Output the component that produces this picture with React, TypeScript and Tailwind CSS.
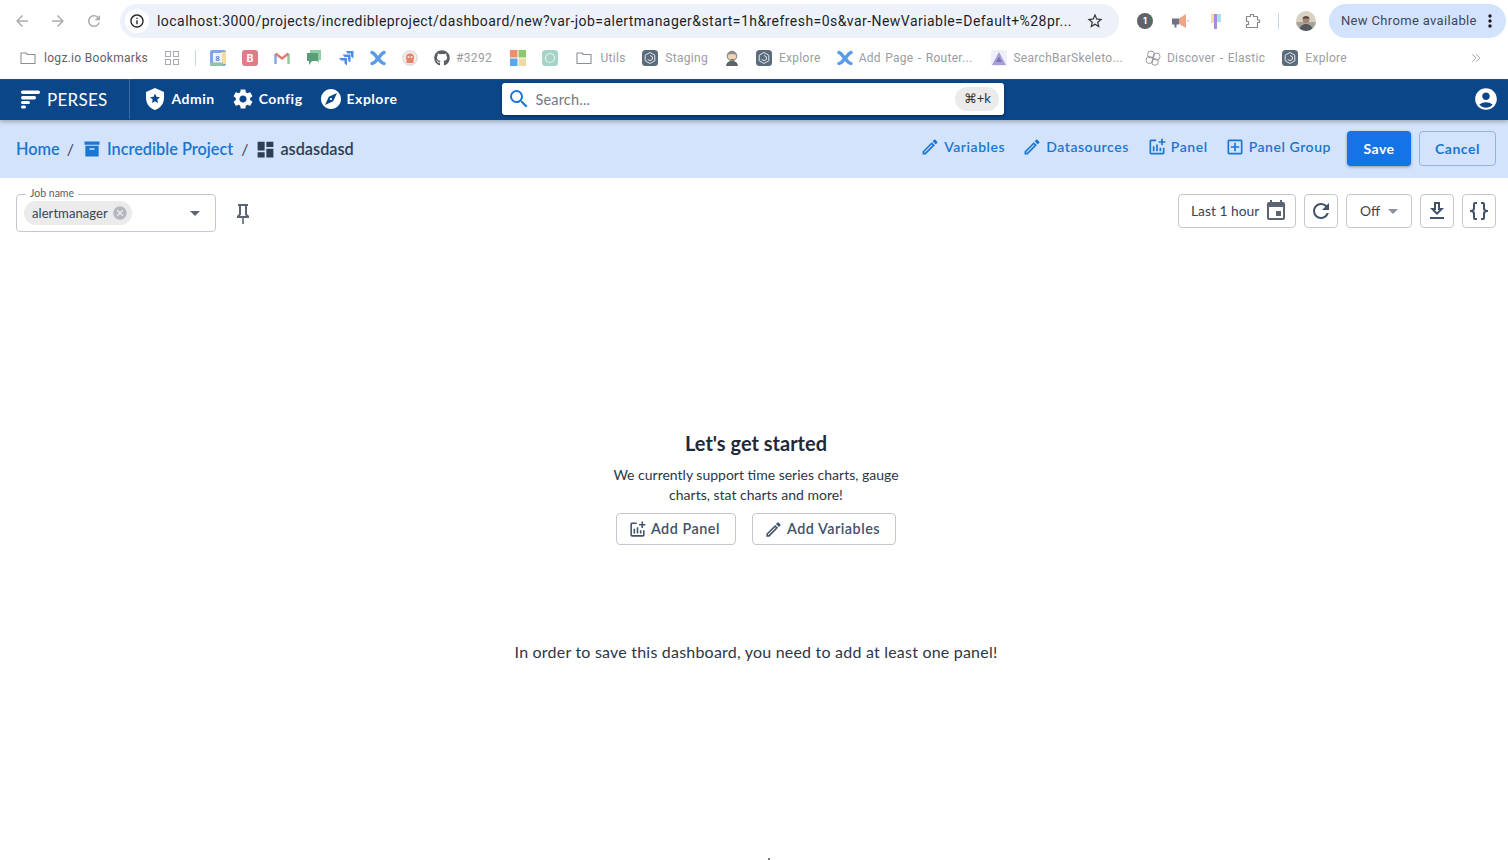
import { FaGithub } from "react-icons/fa";
import { MdAccountCircle, MdArrowBack, MdArrowDropDown, MdArrowForward, MdCancel, MdDashboard, MdExplore, MdInfoOutline, MdMoreVert, MdRefresh, MdSearch, MdSettings, MdStarBorder } from "react-icons/md";
import type { ReactNode } from "react";

// material design paths that the icon packages don't carry
const paths = {
  shieldStar: "M12,1L3,5V11C3,16.55 6.84,21.74 12,23C17.16,21.74 21,16.55 21,11V5L12,1M15.08,16L12,14.15L8.93,16L9.74,12.5L7.03,10.16L10.61,9.85L12,6.55L13.39,9.84L16.97,10.15L14.26,12.5L15.08,16Z",
  archive: "M3,3H21V7H3V3M4,8H20V21H4V8M9.5,11A0.5,0.5 0 0,0 9,11.5V13H15V11.5A0.5,0.5 0 0,0 14.5,11H9.5Z",
  pencil: "M14.06,9L15,9.94L5.92,19H5V18.08L14.06,9M17.66,3C17.41,3 17.15,3.1 16.96,3.29L15.13,5.12L18.88,8.87L20.71,7.04C21.1,6.65 21.1,6 20.71,5.63L18.37,3.29C18.17,3.09 17.92,3 17.66,3M14.06,6.19L3,17.25V21H6.75L17.81,9.94L14.06,6.19Z",
  chartPlus: "M22 5V7H19V10H17V7H14V5H17V2H19V5H22M19 19H5V5H11V3H5C3.9 3 3 3.9 3 5V19C3 20.1 3.9 21 5 21H19C20.1 21 21 20.1 21 19V13H19V19M15 13V17H17V13H15M11 17H13V9H11V17M7 17H9V11H7V17Z",
  plusBox: "M19,19V5H5V19H19M19,3A2,2 0 0,1 21,5V19A2,2 0 0,1 19,21H5A2,2 0 0,1 3,19V5C3,3.89 3.9,3 5,3H19M11,7H13V11H17V13H13V17H11V13H7V11H11V7Z",
  pin: "M16,12V4H17V2H7V4H8V12L6,14V16H11.2V22H12.8V16H18V14L16,12M8.8,14L10,12.8V4H14V12.8L15.2,14H8.8Z",
  calendar: "M19,19H5V8H19M16,1V3H8V1H6V3H5C3.89,3 3,3.89 3,5V19A2,2 0 0,0 5,21H19A2,2 0 0,0 21,19V5C21,3.89 20.1,3 19,3H18V1M17,12H12V17H17V12Z",
  refresh: "M17.65,6.35C16.2,4.9 14.21,4 12,4A8,8 0 0,0 4,12A8,8 0 0,0 12,20C15.73,20 18.84,17.45 19.73,14H17.65C16.83,16.33 14.61,18 12,18A6,6 0 0,1 6,12A6,6 0 0,1 12,6C13.66,6 15.14,6.69 16.22,7.78L13,11H20V4L17.65,6.35Z",
  download: "M13,5V11H14.17L12,13.17L9.83,11H11V5H13M15,3H9V9H5L12,16L19,9H15V3M19,18H5V20H19V18Z",
  braces: "M8,3A2,2 0 0,0 6,5V9A2,2 0 0,1 4,11H3V13H4A2,2 0 0,1 6,15V19A2,2 0 0,0 8,21H10V19H8V14A2,2 0 0,0 6,12A2,2 0 0,0 8,10V5H10V3H8M16,3A2,2 0 0,1 18,5V9A2,2 0 0,0 20,11H21V13H20A2,2 0 0,0 18,15V19A2,2 0 0,1 16,21H14V19H16V14A2,2 0 0,1 18,12A2,2 0 0,1 16,10V5H14V3H16Z",
};

function Mdi({ d, className }: { d: string; className?: string }) {
  return (
    <svg viewBox="0 0 24 24" fill="currentColor" className={className}>
      <path d={d} />
    </svg>
  );
}

function Folder() {
  return (
    <svg viewBox="0 0 16 16" fill="none" stroke="#8a8f96" strokeWidth="1.1" className="w-4 h-4">
      <path d="M1 3h5l1.5 1.5H15v9H1z" strokeLinejoin="round" />
    </svg>
  );
}

function XLogo() {
  return (
    <svg viewBox="0 0 16 16" className="w-4 h-4" fill="none" stroke="#5a9be8" strokeWidth="3.4" strokeLinecap="round">
      <path d="M2 13.500C5 13.500 5.500 11 8 8.500C10.500 6 11.500 3 14 2.500" />
      <path d="M2 2.500C4.500 3 5.500 6 8 8.500C10.500 11 11.500 13.500 14 13.500" />
    </svg>
  );
}

function Hex() {
  return (
    <svg viewBox="0 0 16 16" className="w-4 h-4">
      <rect width="16" height="16" rx="3.500" fill="#5b6b7c" />
      <path d="M8 2.500l4.800 2.700v5.600L8 13.500l-4.800-2.700V5.200zM8 5.500l2.400 1.300v2.600L8 10.700 5.600 9.400" fill="none" stroke="#dfe5ea" strokeWidth="1" />
    </svg>
  );
}

function Bookmark({ icon, label, ml, gap = "gap-2", dark, wide }: { icon: ReactNode; label?: string; ml: string; gap?: string; dark?: boolean; wide?: boolean }) {
  return (
    <div className={`flex items-center shrink-0 ${gap} ${ml}`}>
      {icon}
      {label && (
        <span className={`text-[12px] tracking-[0.3px] whitespace-nowrap ${dark ? "text-[#5f6368]" : "text-[#9a9da1]"} ${wide ? "[word-spacing:1px]" : ""}`}>
          {label}
        </span>
      )}
    </div>
  );
}

function BrowserChrome() {
  return (
    <div className="h-[79px] bg-white font-['Inter',sans-serif]">
      <div className="h-[42px] flex items-center">
        <MdArrowBack className="w-[18px] h-[18px] ml-[13px] text-[#a9adb2]" />
        <MdArrowForward className="w-[18px] h-[18px] ml-[18px] text-[#a9adb2]" />
        <MdRefresh className="w-[18px] h-[18px] ml-[18px] text-[#a9adb2]" />
        <div className="w-[999px] h-[34px] ml-[17px] rounded-full bg-[#edf2fa] flex items-center">
          <span className="ml-[5px] w-6 h-6 rounded-full bg-white flex items-center justify-center">
            <MdInfoOutline className="w-[16px] h-[16px] text-[#1f1f1f]" />
          </span>
          <span className="ml-[8px] w-[915px] text-[14px] text-[#1f1f1f] whitespace-nowrap overflow-hidden font-['Roboto',sans-serif] tracking-[0.45px]">
            localhost:3000/projects/incredibleproject/dashboard/new?var-job=alertmanager&amp;start=1h&amp;refresh=0s&amp;var-NewVariable=Default+%28pr...
          </span>
          <MdStarBorder className="w-[18px] h-[18px] ml-[14px] text-[#333]" />
        </div>
        <span className="ml-[18px] w-4 h-4 rounded-full bg-[#5f6368] text-white text-[9px] font-bold flex items-center justify-center">1</span>
        <svg viewBox="0 0 18 16" className="w-[18px] h-4 ml-[19px]">
          <path d="M0 5.500h7v6H4.500v3h-2v-3H0z" fill="#6b7280" />
          <path d="M7 5.500l7-4.500v14l-7-4z" fill="#f2a287" />
          <rect x="15.500" y="7" width="1.500" height="1.500" fill="#b9bcc0" />
        </svg>
        <svg viewBox="0 0 16 16" className="w-4 h-4 ml-[19px]">
          <rect x="2" y="1" width="3" height="9" fill="#f6df9a" />
          <rect x="5" y="1" width="3" height="15" fill="#a78be0" />
          <rect x="8" y="1" width="4" height="8" fill="#a9dff0" />
        </svg>
        <svg viewBox="0 0 16 16" className="w-4 h-4 ml-[20px]" fill="none" stroke="#858a90" strokeWidth="1.2">
          <path d="M1.500 3.500h4v-2h3v2h4v3.500h2v2.500h-2v5h-11v-3h2v-3h-2z" strokeLinejoin="round" />
        </svg>
        <div className="w-px h-4 bg-[#c8d6e8] ml-[17px]" />
        <svg viewBox="0 0 20 20" className="w-5 h-5 ml-[17px]">
          <defs>
            <clipPath id="avatar-clip"><circle cx="10" cy="10" r="10" /></clipPath>
          </defs>
          <g clipPath="url(#avatar-clip)">
            <rect width="20" height="20" fill="#d9d2c4" />
            <rect y="11" width="20" height="9" fill="#a8a49d" />
            <circle cx="10" cy="8.500" r="3.500" fill="#a9846c" />
            <path d="M6.500 7.500c.5-3 6.500-3 7 0z" fill="#4b4540" />
            <path d="M3 20c.5-5 3.500-7 7-7s6.500 2 7 7z" fill="#55595e" />
          </g>
        </svg>
        <div className="ml-[13px] w-[177px] h-[34px] rounded-full bg-[#d3e3fd] flex items-center pl-3">
          <span className="text-[13px] text-[#3c4a5c] whitespace-nowrap font-['Roboto',sans-serif] tracking-[0.34px]">New Chrome available</span>
          <MdMoreVert className="w-[20px] h-[20px] text-[#1f1f1f] ml-[3px]" />
        </div>
      </div>
      <div className="h-[32px] flex items-center font-['Roboto',sans-serif] relative">
        <Bookmark ml="ml-[20px]" dark icon={<Folder />} label="logz.io Bookmarks" />
        <svg viewBox="0 0 16 16" className="w-4 h-4 ml-[16px]" fill="none" stroke="#a9adb2" strokeWidth="1.1">
          <rect x="1.500" y="1.500" width="5" height="5" />
          <rect x="9.500" y="1.500" width="5" height="5" />
          <rect x="1.500" y="9.500" width="5" height="5" />
          <rect x="9.500" y="9.500" width="5" height="5" />
        </svg>
        <div className="w-px h-4 bg-[#c8d6e8] ml-[15px]" />
        <Bookmark ml="ml-[14px]" icon={
          <svg viewBox="0 0 16 16" className="w-4 h-4">
            <rect width="16" height="16" rx="2" fill="#7ea7e3" />
            <rect x="11" y="2" width="5" height="12" fill="#f2dc9e" />
            <rect y="12.500" width="13" height="3.500" fill="#93c2a4" />
            <rect x="3" y="3" width="9" height="9.500" fill="#eef3fb" />
            <text x="7.500" y="11" textAnchor="middle" fontSize="8" fontWeight="700" fill="#5a8ad6" fontFamily="Roboto">8</text>
          </svg>
        } />
        <Bookmark ml="ml-[16px]" icon={
          <svg viewBox="0 0 16 16" className="w-4 h-4">
            <rect width="16" height="16" rx="3" fill="#e07b88" />
            <text x="8" y="12" textAnchor="middle" fontSize="11" fontWeight="700" fill="white" fontFamily="Roboto">B</text>
          </svg>
        } />
        <Bookmark ml="ml-[16px]" icon={
          <svg viewBox="0 0 16 16" className="w-4 h-4" fill="none" strokeWidth="2.400">
            <path d="M1.500 14V4" stroke="#7ea7e3" />
            <path d="M14.500 14V4" stroke="#8cc99d" />
            <path d="M1.500 3.500l6.500 5 6.500-5" stroke="#e07b72" />
          </svg>
        } />
        <Bookmark ml="ml-[16px]" icon={
          <svg viewBox="0 0 16 16" className="w-4 h-4">
            <path d="M4 0h11v10h-2v3l-3-3H4z" fill="#8fd0a5" />
            <path d="M1 3h11v8H6l-3 4v-4H1z" fill="#5b9d78" />
          </svg>
        } />
        <Bookmark ml="ml-[16px]" icon={
          <svg viewBox="0 0 16 16" className="w-4 h-4" fill="#4a90e2">
            <path d="M8 1h7.500v7.500l-2.500-2V3.500H9.500z" />
            <path d="M4.500 4.500h8v8l-2.500-2V7H6.500z" />
            <path d="M1 8h8v7.500l-2.500-2V10.500H3z" />
          </svg>
        } />
        <Bookmark ml="ml-[16px]" icon={<XLogo />} />
        <Bookmark ml="ml-[16px]" icon={
          <svg viewBox="0 0 16 16" className="w-4 h-4">
            <circle cx="8" cy="8" r="7.300" fill="#f5ebe4" stroke="#c9cdd2" strokeWidth="0.8" />
            <circle cx="8" cy="7.500" r="4" fill="#e5826a" />
            <rect x="4.500" y="10" width="7" height="3" fill="#e5826a" />
            <circle cx="6.500" cy="7" r="1" fill="#f5ebe4" />
            <circle cx="9.500" cy="7" r="1" fill="#f5ebe4" />
          </svg>
        } />
        <Bookmark ml="ml-[16px]" gap="gap-[6px]" icon={<FaGithub className="w-4 h-4 text-[#5b5f64]" />} label="#3292" />
        <Bookmark ml="ml-[18.500px]" icon={
          <svg viewBox="0 0 16 16" className="w-4 h-4">
            <rect x="0" y="0" width="7.500" height="7.500" fill="#ef8e6c" />
            <rect x="8.500" y="0" width="7.500" height="7.500" fill="#8cc96c" />
            <rect x="0" y="8.500" width="7.500" height="7.500" fill="#5aa8ec" />
            <rect x="8.500" y="8.500" width="7.500" height="7.500" fill="#efd7a6" />
          </svg>
        } />
        <Bookmark ml="ml-[16px]" icon={
          <svg viewBox="0 0 16 16" className="w-4 h-4">
            <rect width="16" height="16" rx="3.500" fill="#a5d3c5" />
            <circle cx="8" cy="8" r="4.500" fill="none" stroke="#e6f2ee" strokeWidth="1.200" />
          </svg>
        } />
        <Bookmark ml="ml-[18px]" icon={<Folder />} label="Utils" />
        <Bookmark ml="ml-[16.500px]" gap="gap-[7px]" icon={<Hex />} label="Staging" />
        <Bookmark ml="ml-[16px]" icon={
          <svg viewBox="0 0 16 16" className="w-4 h-4">
            <path d="M2 16c.5-4 3-5 6-5s5.500 1 6 5z" fill="#5f6369" />
            <circle cx="8" cy="6" r="4.800" fill="#eed3b8" stroke="#6b6258" strokeWidth="0.800" />
            <path d="M3.500 5c.5-4 8-5 9 0-3-1.500-6-1.500-9 0z" fill="#8f8a84" />
            <path d="M6.500 9.500h4" stroke="#c9564f" strokeWidth="1" />
          </svg>
        } />
        <Bookmark ml="ml-[16px]" gap="gap-[7px]" icon={<Hex />} label="Explore" />
        <Bookmark ml="ml-[16px]" gap="gap-[6px]" wide icon={<XLogo />} label="Add Page - Router..." />
        <Bookmark ml="ml-[19px]" gap="gap-[6px]" icon={
          <svg viewBox="0 0 16 16" className="w-4 h-4">
            <rect width="16" height="16" rx="2" fill="#eef0fa" />
            <path d="M8 2l7 13H1z" fill="#a79fd8" />
            <path d="M8 6.500l3 5.500H5z" fill="#7d74b8" />
          </svg>
        } label="SearchBarSkeleto..." />
        <Bookmark ml="ml-[22px]" gap="gap-[6px]" wide icon={
          <svg viewBox="0 0 16 16" className="w-4 h-4" fill="none" stroke="#8a8f96" strokeWidth="0.9">
            <circle cx="6" cy="4.500" r="3.500" />
            <circle cx="11.500" cy="6.500" r="3.500" />
            <circle cx="4.500" cy="10" r="3.500" />
            <circle cx="10" cy="12" r="3.300" />
          </svg>
        } label="Discover - Elastic" />
        <Bookmark ml="ml-[17px]" gap="gap-[7px]" icon={<Hex />} label="Explore" />
        <svg viewBox="0 0 16 16" className="w-3 h-3 absolute right-[26px] top-[10px]" fill="none" stroke="#9a9da1" strokeWidth="1.200">
          <path d="M3 3l5 5-5 5M8 3l5 5-5 5" />
        </svg>
      </div>
    </div>
  );
}

function NavItem({ icon, label, ml }: { icon: ReactNode; label: string; ml: string }) {
  return (
    <div className={`flex items-center gap-[4px] text-white text-[14px] font-bold tracking-[0.5px] ${ml}`}>
      {icon}
      <span className="pb-[1px]">{label}</span>
    </div>
  );
}

function AppBar() {
  return (
    <div className="h-[41px] pb-[2px] bg-[#0b4689] border-t border-[#3f4a58] flex items-center shadow-[0_2px_4px_rgba(0,0,0,0.25)] relative">
      <svg viewBox="0 0 20 20" className="w-5 h-5 ml-[20px]" fill="white">
        <rect x="1" y="1.500" width="19" height="3.500" rx="1.700" />
        <rect x="1" y="7" width="15" height="3.500" rx="1.700" />
        <rect x="1" y="12" width="9" height="3" rx="1.500" />
        <rect x="1" y="16.500" width="5" height="3" rx="1.500" />
      </svg>
      <span className="ml-[7px] pt-[1px] text-white text-[17px] tracking-[0.25px]">PERSES</span>
      <div className="w-px h-[40px] bg-[#3a6ba3] ml-[22px]" />
      <NavItem ml="ml-[13px]" icon={<Mdi d={paths.shieldStar} className="w-[24px] h-[24px]" />} label="Admin" />
      <NavItem ml="ml-[16px]" icon={<MdSettings className="w-[24px] h-[24px]" />} label="Config" />
      <NavItem ml="ml-[16px]" icon={<MdExplore className="w-[24px] h-[24px]" />} label="Explore" />
      <div className="ml-[105px] w-[502px] h-[32px] bg-white rounded-[3px] flex items-center shadow-[0_1px_3px_rgba(0,0,0,0.4)]">
        <MdSearch className="w-[24px] h-[24px] ml-[5px] text-[#1976d2]" />
        <span className="ml-[4px] pt-[1px] text-[14.500px] text-[#6e7a88] tracking-[0.2px]">Search...</span>
        <span className="ml-auto mr-[5px] w-[44px] h-[24px] rounded-full bg-[#ebebeb] text-[#333] text-[13px] flex items-center justify-center">⌘+k</span>
      </div>
      <MdAccountCircle className="w-[26px] h-[26px] text-white ml-auto mr-[9px]" />
    </div>
  );
}

function ToolbarLink({ d, label, ml }: { d: string; label: string; ml: string }) {
  return (
    <div className={`flex items-center gap-[4px] text-[#1976d2] text-[14px] font-semibold tracking-[0.55px] ${ml}`}>
      <Mdi d={d} className="w-[20px] h-[20px]" />
      <span className="whitespace-nowrap">{label}</span>
    </div>
  );
}

function Toolbar() {
  return (
    <div className="h-[58px] bg-[#d3e3fb] flex items-center pl-[16px]">
      <span className="text-[#1976d2] text-[16.300px] font-semibold">Home</span>
      <span className="text-[#445] text-[16px] ml-[7px]">/</span>
      <Mdi d={paths.archive} className="w-[20px] h-[20px] ml-[8px] text-[#1976d2]" />
      <span className="text-[#1976d2] text-[16.300px] font-semibold ml-[5px]">Incredible Project</span>
      <span className="text-[#445] text-[16px] ml-[8px]">/</span>
      <MdDashboard className="w-[21px] h-[21px] ml-[7px] text-[#2d3e54]" />
      <span className="text-[#2d3e54] text-[16.300px] font-semibold ml-[4px]">asdasdasd</span>
      <div className="ml-auto flex items-center -mt-[5px]">
        <ToolbarLink d={paths.pencil} label="Variables" ml="" />
        <ToolbarLink d={paths.pencil} label="Datasources" ml="ml-[17px]" />
        <ToolbarLink d={paths.chartPlus} label="Panel" ml="ml-[18px]" />
        <ToolbarLink d={paths.plusBox} label="Panel Group" ml="ml-[17px]" />
      </div>
      <button className="ml-[16px] -mt-[1px] w-[64px] h-[35px] bg-[#1473e6] text-white text-[14px] font-bold tracking-[0.4px] rounded-[4px] shadow-[0_1px_3px_rgba(0,0,0,0.35)]">Save</button>
      <button className="ml-[8px] -mt-[1px] mr-[12px] w-[77px] h-[35px] border border-[#90b4e4] text-[#1976d2] text-[14px] font-bold tracking-[0.5px] rounded-[4px]">Cancel</button>
    </div>
  );
}

function SquareButton({ d }: { d: string }) {
  return (
    <button className="w-[34px] h-[34px] border border-[#c3c8cf] rounded-[4px] flex items-center justify-center text-[#42526a]">
      <Mdi d={d} className="w-[24px] h-[24px]" />
    </button>
  );
}

function FilterRow() {
  return (
    <div className="flex items-start pl-[16px] pr-[12px] pt-[16px]">
      <div className="relative w-[200px] h-[38px] border border-[#c3c8cf] rounded-[4px] flex items-center pl-[7px]">
        <span className="absolute -top-[9px] left-[9px] bg-white px-[4px] text-[10.500px] leading-[14px] text-[#55606e]">Job name</span>
        <span className="h-[24px] w-[108px] rounded-full bg-[#ebebeb] flex items-center pl-[8px] text-[13.100px] tracking-[0.03px] text-[#3a4454]">
          <span className="pt-[1px]">alertmanager</span>
          <MdCancel className="w-[16px] h-[16px] ml-[4px] text-[#b4b8bd]" />
        </span>
        <MdArrowDropDown className="absolute right-[8px] w-[24px] h-[24px] text-[#5a6472]" />
      </div>
      <Mdi d={paths.pin} className="w-[24px] h-[24px] text-[#5a6472] ml-[15px] mt-[8px]" />
      <div className="ml-auto flex items-center">
        <div className="w-[118px] h-[34px] border border-[#c3c8cf] rounded-[4px] flex items-center pl-[12px] text-[13.800px] text-[#3a4454]">
          <span>Last 1 hour</span>
          <Mdi d={paths.calendar} className="w-[24px] h-[24px] ml-[5px] text-[#5a6472]" />
        </div>
        <div className="ml-[8px]"><SquareButton d={paths.refresh} /></div>
        <div className="ml-[8px] w-[66px] h-[34px] border border-[#c3c8cf] rounded-[4px] flex items-center pl-[13px] text-[13.800px] text-[#3a4454]">
          <span>Off</span>
          <MdArrowDropDown className="w-[24px] h-[24px] ml-[1px] text-[#8a919c]" />
        </div>
        <div className="ml-[8px]"><SquareButton d={paths.download} /></div>
        <div className="ml-[8px]"><SquareButton d={paths.braces} /></div>
      </div>
    </div>
  );
}

function OutlineButton({ d, label }: { d: string; label: string }) {
  return (
    <button className="h-[32px] pl-[11px] pr-[15px] border border-[#c3c8cf] rounded-[4px] flex items-center gap-[4px] text-[#42526a] text-[14.400px] font-semibold tracking-[0.5px]">
      <Mdi d={d} className="w-[19px] h-[19px]" />
      {label}
    </button>
  );
}

function EmptyState() {
  return (
    <div className="flex flex-col items-center pl-[4px] pt-[197px] text-[#2d3644]">
      <h2 className="text-[20px] leading-[28px] font-bold text-[#1f2937]">Let's get started</h2>
      <p className="mt-[8px] w-[300px] text-center text-[14px] leading-[20px]">
        We currently support time series charts, gauge charts, stat charts and more!
      </p>
      <div className="mt-[8px] flex gap-[16px]">
        <OutlineButton d={paths.chartPlus} label="Add Panel" />
        <OutlineButton d={paths.pencil} label="Add Variables" />
      </div>
      <p className="mt-[95px] text-[16px] leading-[24px] tracking-[0.21px]">In order to save this dashboard, you need to add at least one panel!</p>
    </div>
  );
}

export default function App() {
  return (
    <div className="relative w-[1508px] h-[860px] overflow-hidden bg-white font-['Lato',sans-serif]">
      <BrowserChrome />
      <AppBar />
      <Toolbar />
      <FilterRow />
      <EmptyState />
      {/* stray pixel of the cursor at the bottom edge */}
      <div className="absolute left-[768px] top-[858px] w-[2px] h-[2px] bg-[#777]" />
    </div>
  );
}
